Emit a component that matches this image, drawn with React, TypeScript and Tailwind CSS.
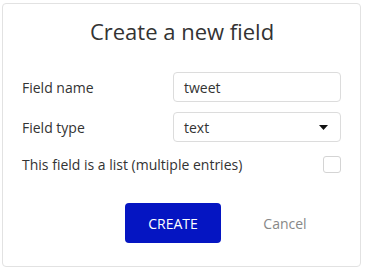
import React from 'react';

const font = { fontFamily: '"Open Sans", "Noto Sans", sans-serif' };

export default function App() {
  return (
    <div className="w-[366px] h-[271px] bg-white pt-[3px] pl-[2px]" style={font}>
      <div className="w-[359px] h-[264px] border border-[#e2e2e2] rounded-[4px] bg-white flex flex-col">
        <h1 className="text-center text-[22px] leading-[30px] text-[#333] mt-[12px] pl-[1px]">
          Create a new field
        </h1>

        <div className="flex flex-col px-[19px] mt-[26px] text-[14px] text-[#333]">
          <div className="flex items-center justify-between h-[30px]">
            <span>Field name</span>
            <div className="w-[168px] h-[30px] border border-[#dcdcdc] rounded-[4px] flex items-center px-[10px]">
              tweet
            </div>
          </div>

          <div className="flex items-center justify-between h-[30px] mt-[10px]">
            <span>Field type</span>
            <div className="w-[168px] h-[30px] border border-[#dcdcdc] rounded-[4px] flex items-center justify-between pl-[10px] pr-[12px]">
              <span>text</span>
              <svg width="9" height="5" viewBox="0 0 9 5">
                <path d="M0 0 L9 0 L4.5 5 Z" fill="#111" />
              </svg>
            </div>
          </div>

          <div className="flex items-center justify-between h-[18px] mt-[13px]">
            <span>This field is a list (multiple entries)</span>
            <div className="w-[18px] h-[17px] border border-[#d4d4d4] rounded-[3px]" />
          </div>
        </div>

        <div className="flex items-center mt-[30px] pl-[122px]">
          <button className="w-[96px] h-[40px] bg-[#0515c2] rounded-[4px] text-white text-[14px] uppercase">
            Create
          </button>
          <button className="w-[96px] h-[40px] ml-[16px] text-[#888] text-[14px]">
            Cancel
          </button>
        </div>
      </div>
    </div>
  );
}
